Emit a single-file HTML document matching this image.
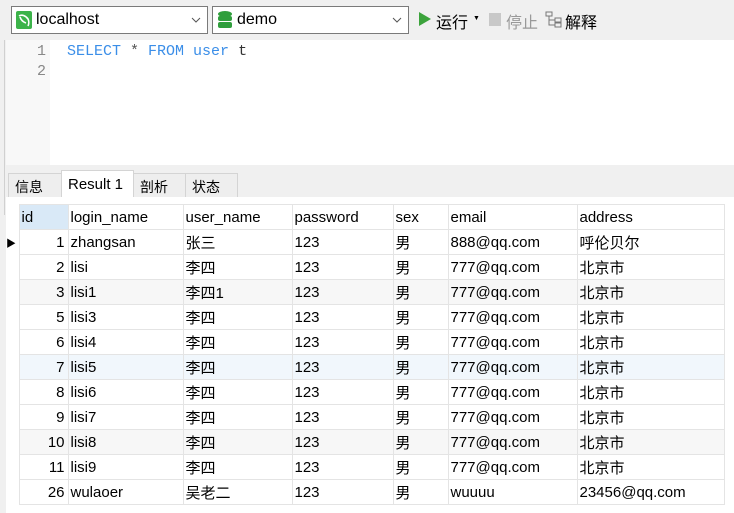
<!DOCTYPE html>
<html><head><meta charset="utf-8"><style>
*{margin:0;padding:0;box-sizing:border-box}
body{width:734px;height:513px;background:#f0f0f0;font-family:"Liberation Sans","Noto Sans CJK SC",sans-serif;font-size:15px;color:#000;position:relative;overflow:hidden}
.abs{position:absolute}
.combo{position:absolute;top:6px;height:28px;border:1px solid #7a7a7a;background:#fff}
.combo span{position:absolute;left:24px;top:4px;font-size:16px}
.combo svg.arr{position:absolute;right:6px;top:10px}
.editor{left:6px;top:40px;width:728px;height:125px;background:#fff}
.gutter{left:6px;top:40px;width:44px;height:125px;background:#f8f8f8}
.code{font-family:"Liberation Mono","DejaVu Sans Mono",monospace;font-size:15px;color:#3b8ee8}
.ln{font-family:"Liberation Mono",monospace;font-size:15px;color:#888;width:40px;text-align:right}
.tab{position:absolute;top:173px;height:24px;border:1px solid #d4d4d4;border-bottom:none;background:#eeeeee;font-size:14px;padding:3px 0 0 6px}
.grid{left:6px;top:197px;width:728px;height:316px;background:#fff}
table{position:absolute;left:6px;top:204px;border-collapse:collapse;table-layout:fixed}
td{height:25px;border:1px solid #e4e4e4;padding:1px 2px 0;font-size:15px;white-space:nowrap;overflow:hidden}
tr.g td{background:#f7f7f7}
tr.b td{background:#f1f7fc}
td.i{text-align:right;padding-right:3px}
td.x{border:none;border-right:1px solid #e4e4e4;background:#fff!important}
</style></head><body>
<div class="abs" style="left:4px;top:40px;width:1px;height:175px;background:#d0d0d0"></div>
<div class="combo" style="left:11px;width:197px">
<svg class="abs" style="left:4px;top:4px" width="16" height="18"><rect width="16" height="18" rx="2" fill="#3cb34a"/><path d="M3 5c3-2 7 0 9 3 1 2 1 5 0 7M4 6c1 3 3 5 6 6" stroke="#fff" stroke-width="1.6" fill="none"/></svg>
<span>localhost</span><svg class="arr" width="10" height="6"><path d="M1 1L5 5L9 1" stroke="#555" fill="none"/></svg></div>
<div class="combo" style="left:212px;width:197px">
<svg class="abs" style="left:5px;top:4px" width="14" height="18"><ellipse cx="7" cy="3" rx="7" ry="3" fill="#2f9e3c"/><rect x="0" y="5" width="14" height="5" rx="2" fill="#2f9e3c"/><rect x="0" y="11" width="14" height="6" rx="2" fill="#2f9e3c"/></svg>
<span>demo</span><svg class="arr" width="10" height="6"><path d="M1 1L5 5L9 1" stroke="#555" fill="none"/></svg></div>
<svg class="abs" style="left:419px;top:12px" width="12" height="14"><path d="M0 0L12 7L0 14Z" fill="#3ca33c"/></svg>
<div class="abs" style="left:436px;top:9px;font-size:16px">运行</div>
<div class="abs" style="left:473px;top:15px;font-size:7px">▼</div>
<div class="abs" style="left:489px;top:13px;width:12px;height:13px;background:#c8c8c8"></div>
<div class="abs" style="left:506px;top:9px;font-size:16px;color:#999">停止</div>
<svg class="abs" style="left:545px;top:11px" width="18" height="17"><g fill="none" stroke="#777"><rect x="1" y="1" width="6" height="4"/><rect x="10" y="7" width="6" height="4"/><rect x="10" y="12" width="6" height="4"/><path d="M4 5v9h6M4 9h6"/></g></svg>
<div class="abs" style="left:565px;top:9px;font-size:16px">解释</div>
<div class="abs editor"></div>
<div class="abs gutter"></div>
<div class="abs ln" style="left:6px;top:43px">1</div>
<div class="abs ln" style="left:6px;top:63px">2</div>
<div class="abs code" style="left:67px;top:43px">SELECT <span style="color:#555">*</span> FROM user <span style="color:#333">t</span></div>
<div class="tab" style="left:8px;width:54px">信息</div>
<div class="tab" style="left:185px;width:53px">状态</div>
<div class="tab" style="left:133px;width:53px">剖析</div>
<div class="tab" style="left:61px;top:170px;height:28px;width:73px;background:#fff;font-size:15px;padding-top:5px">Result 1</div>
<div class="abs grid"></div>
<table>
<colgroup><col style="width:13px"><col style="width:49px"><col style="width:115px"><col style="width:109px"><col style="width:101px"><col style="width:55px"><col style="width:129px"><col style="width:147px"></colgroup>
<tr><td class="x"></td><td style="background:#d9e9f7">id</td><td>login_name</td><td>user_name</td><td>password</td><td>sex</td><td>email</td><td>address</td></tr>
<tr><td class="x" style="font-size:10px;padding:0">▶</td><td class="i">1</td><td>zhangsan</td><td>张三</td><td>123</td><td>男</td><td>888@qq.com</td><td>呼伦贝尔</td></tr>
<tr><td class="x"></td><td class="i">2</td><td>lisi</td><td>李四</td><td>123</td><td>男</td><td>777@qq.com</td><td>北京市</td></tr>
<tr class="g"><td class="x"></td><td class="i">3</td><td>lisi1</td><td>李四1</td><td>123</td><td>男</td><td>777@qq.com</td><td>北京市</td></tr>
<tr><td class="x"></td><td class="i">5</td><td>lisi3</td><td>李四</td><td>123</td><td>男</td><td>777@qq.com</td><td>北京市</td></tr>
<tr><td class="x"></td><td class="i">6</td><td>lisi4</td><td>李四</td><td>123</td><td>男</td><td>777@qq.com</td><td>北京市</td></tr>
<tr class="b"><td class="x"></td><td class="i">7</td><td>lisi5</td><td>李四</td><td>123</td><td>男</td><td>777@qq.com</td><td>北京市</td></tr>
<tr><td class="x"></td><td class="i">8</td><td>lisi6</td><td>李四</td><td>123</td><td>男</td><td>777@qq.com</td><td>北京市</td></tr>
<tr><td class="x"></td><td class="i">9</td><td>lisi7</td><td>李四</td><td>123</td><td>男</td><td>777@qq.com</td><td>北京市</td></tr>
<tr class="g"><td class="x"></td><td class="i">10</td><td>lisi8</td><td>李四</td><td>123</td><td>男</td><td>777@qq.com</td><td>北京市</td></tr>
<tr><td class="x"></td><td class="i">11</td><td>lisi9</td><td>李四</td><td>123</td><td>男</td><td>777@qq.com</td><td>北京市</td></tr>
<tr><td class="x"></td><td class="i">26</td><td>wulaoer</td><td>吴老二</td><td>123</td><td>男</td><td>wuuuu</td><td>23456@qq.com</td></tr>
</table>
</body></html>
